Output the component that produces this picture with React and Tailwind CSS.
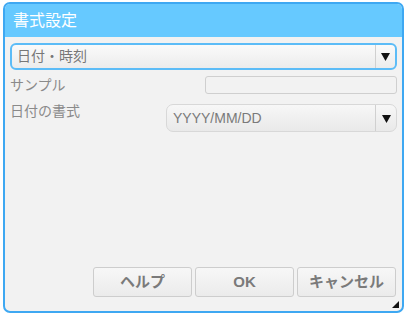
function Arrow() {
  return (
    <svg width="9" height="9" viewBox="0 0 9 9">
      <polygon points="0,1 9,1 4.5,9" fill="#111" />
    </svg>
  );
}

export default function App() {
  const jp = { fontFamily: '"Liberation Sans", "Noto Sans CJK JP", sans-serif' };

  return (
    <div className="w-[407px] h-[315px] bg-white pt-[2px] pl-[3px]" style={jp}>
      <div className="relative w-[401px] h-[311px] border-2 border-[#3ea8f2] rounded-[7px] bg-[#f2f2f2] flex flex-col overflow-hidden">
        <div className="h-[33px] bg-[#66c9ff] flex items-center pl-[8px] text-white text-[16px]">
          書式設定
        </div>

        <div className="flex-1 flex flex-col pt-[6px] pl-[5px] pr-[5px]">
          <div className="h-[27px] flex items-stretch border-2 border-[#5cbcf7] rounded-[6px] bg-gradient-to-b from-[#fafafa] to-[#ececec]">
            <div className="flex-1 flex items-center pl-[5px] text-[14px] text-[#777777]">日付・時刻</div>
            <div className="w-[20px] border-l border-[#d0d0d0] flex items-center justify-center"><Arrow /></div>
          </div>

          <div className="flex items-start mt-[6px]">
            <div className="flex-1 text-[14px] text-[#8a8a8a] leading-[16px] pt-[1px]">サンプル</div>
            <div className="w-[192px] h-[18px] border border-[#cfcfcf] rounded-[3px] bg-[#f2f2f2]" />
          </div>

          <div className="flex items-start mt-[10px]">
            <div className="flex-1 text-[14px] text-[#8a8a8a] leading-[16px] -mt-[1px]">日付の書式</div>
            <div className="w-[231px] h-[28px] flex items-stretch border border-[#d8d8d8] rounded-[7px] bg-gradient-to-b from-[#f7f7f7] to-[#e9e9e9]">
              <div className="flex-1 flex items-center pl-[6px] text-[14px] text-[#7a7a7a]">YYYY/MM/DD</div>
              <div className="w-[21px] border-l border-[#d0d0d0] flex items-center justify-center"><Arrow /></div>
            </div>
          </div>

          <div className="mt-auto mb-[14px] flex justify-end gap-[3px] pr-[1px]">
            {['ヘルプ', 'OK', 'キャンセル'].map(l => (
              <button key={l} className="w-[99px] h-[30px] border border-[#cdcdcd] rounded-[3px] bg-gradient-to-b from-[#f7f7f7] to-[#ebebeb] text-[15px] font-bold text-[#7a7a7a]">
                {l}
              </button>
            ))}
          </div>
        </div>

        <svg className="absolute right-[3px] bottom-[3px]" width="7" height="7" viewBox="0 0 7 7">
          <polygon points="7,0 7,7 0,7" fill="#111" />
        </svg>
      </div>
    </div>
  );
}
